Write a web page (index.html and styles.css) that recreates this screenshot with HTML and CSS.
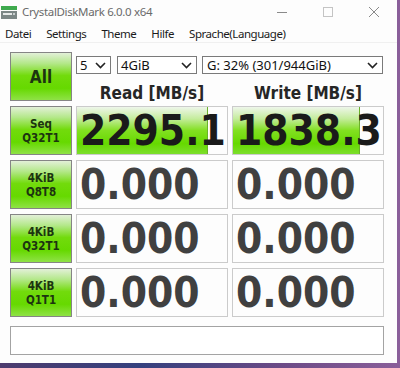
FILE: index.html
```html
<!DOCTYPE html>
<html lang="de">

<head>
    <meta charset="UTF-8">
    <title>CrystalDiskMark 6.0.0 x64</title>
    <link rel="stylesheet" href="styles.css">
</head>

<body>
    <div class="window">

        <div class="titlebar">
            <svg class="app-icon" width="16" height="13" viewBox="0 0 16 13">
                <rect x="0" y="0" width="16" height="4" fill="#3faa4e"/>
                <rect x="0" y="5" width="16" height="8" fill="#7c8786"/>
                <rect x="2" y="7" width="9" height="2" fill="#e6e9e8"/>
                <rect x="12" y="7" width="2" height="2" fill="#c9d0cf"/>
            </svg>
            <span class="title">CrystalDiskMark 6.0.0 x64</span>
            <div class="controls">
                <svg width="10" height="10" viewBox="0 0 10 10"><path d="M0 5.5h10" stroke="#8a8a8a" stroke-width="1"/></svg>
                <svg width="10" height="10" viewBox="0 0 10 10"><rect x="0.5" y="0.5" width="9" height="9" fill="none" stroke="#c4c4c4"/></svg>
                <svg width="10" height="10" viewBox="0 0 10 10"><path d="M0 0L10 10M10 0L0 10" stroke="#8a8a8a" stroke-width="1"/></svg>
            </div>
        </div>

        <div class="menubar">
            <span>Datei</span>
            <span>Settings</span>
            <span>Theme</span>
            <span>Hilfe</span>
            <span>Sprache(Language)</span>
        </div>

        <div class="main">
            <div class="bench-btn all">All</div>

            <div class="head">
                <div class="selects">
                    <div class="select count">5
                        <svg width="11" height="7" viewBox="0 0 11 7"><path d="M1 1l4.5 4.5L10 1" fill="none" stroke="#222" stroke-width="1.6"/></svg>
                    </div>
                    <div class="select size">4GiB
                        <svg width="11" height="7" viewBox="0 0 11 7"><path d="M1 1l4.5 4.5L10 1" fill="none" stroke="#222" stroke-width="1.6"/></svg>
                    </div>
                    <div class="select drive">G: 32% (301/944GiB)
                        <svg width="11" height="7" viewBox="0 0 11 7"><path d="M1 1l4.5 4.5L10 1" fill="none" stroke="#222" stroke-width="1.6"/></svg>
                    </div>
                </div>
                <div class="col-titles">
                    <span>Read [MB/s]</span>
                    <span>Write [MB/s]</span>
                </div>
            </div>

            <div class="bench-btn">Seq<br>Q32T1</div>
            <div class="cell filled" style="--fill: 130px"><span class="val">2295.1</span></div>
            <div class="cell filled" style="--fill: 126px"><span class="val">1838.3</span></div>

            <div class="bench-btn">4KiB<br>Q8T8</div>
            <div class="cell"><span class="val">0.000</span></div>
            <div class="cell"><span class="val">0.000</span></div>

            <div class="bench-btn">4KiB<br>Q32T1</div>
            <div class="cell"><span class="val">0.000</span></div>
            <div class="cell"><span class="val">0.000</span></div>

            <div class="bench-btn">4KiB<br>Q1T1</div>
            <div class="cell"><span class="val">0.000</span></div>
            <div class="cell"><span class="val">0.000</span></div>
        </div>

        <div class="comment"></div>

    </div>
</body>

</html>
```

FILE: styles.css
```css
* {
    box-sizing: border-box;
}

body {
    margin: 0;
    width: 400px;
    height: 368px;
    overflow: hidden;
    background: linear-gradient(90deg, #4d3b6e 0%, #34407e 35%, #6b4a86 70%, #8a5f9a 100%);
}

.window {
    width: 397px;
    height: 363px;
    background-color: #fdfdfd;
    font-family: "Noto Sans", "DejaVu Sans", sans-serif;
}

/* title bar */
.titlebar {
    height: 23px;
    display: flex;
    align-items: center;
    padding-left: 1px;
}

.app-icon {
    margin-top: 1px;
}

.title {
    margin-left: 5px;
    font-size: 11.5px;
    letter-spacing: -0.35px;
    color: #6a6a6a;
}

.controls {
    margin-left: auto;
    display: flex;
    gap: 36px;
    padding-right: 18px;
}

/* menu */
.menubar {
    height: 20px;
    display: flex;
    align-items: center;
    gap: 15px;
    padding: 2px 0 0 5px;
    font-size: 11.5px;
    letter-spacing: -0.45px;
    color: #1b1b1b;
    border-bottom: 1px solid #f0f0f0;
}

/* benchmark grid */
.main {
    display: grid;
    grid-template-columns: 62px 152px 152px;
    grid-auto-rows: 49px;
    column-gap: 4px;
    row-gap: 5px;
    padding: 9px 0 0 10px;
}

.bench-btn {
    display: flex;
    align-items: center;
    justify-content: center;
    text-align: center;
    border: 1px solid #858585;
    background: linear-gradient(#e2f0d8 0%, #b4e88a 22%, #72db0c 48%, #66d900 75%, #8fe246 100%);
    font-family: "DejaVu Sans Condensed", "DejaVu Sans", sans-serif;
    font-weight: bold;
    font-size: 11.5px;
    line-height: 14px;
    color: #1c3410;
}

.all {
    font-size: 17px;
}

.head {
    grid-column: 2 / 4;
    display: flex;
    flex-direction: column;
}

.selects {
    display: flex;
    margin-top: 4px;
    height: 18px;
}

.select {
    display: flex;
    align-items: center;
    justify-content: space-between;
    border: 1px solid #7a7a7a;
    background-color: #fff;
    font-size: 13px;
    color: #111;
    padding: 0 4px 0 3px;
}

.select.count {
    width: 35px;
}

.select.size {
    width: 80px;
    margin-left: 6px;
}

.select.drive {
    width: 181px;
    margin-left: 5px;
    padding-left: 4px;
}

.col-titles {
    flex: 1;
    display: grid;
    grid-template-columns: 152px 152px;
    column-gap: 4px;
    align-items: center;
    text-align: center;
    padding-top: 9px;
    font-family: "DejaVu Sans Condensed", "DejaVu Sans", sans-serif;
    font-weight: bold;
    font-size: 17px;
    color: #262626;
}

.cell {
    border: 1px solid #cbcbcb;
    background-color: #fdfdfd;
    display: flex;
    align-items: center;
    padding-left: 3px;
    overflow: visible;
    white-space: nowrap;
}

.cell.filled {
    background:
        linear-gradient(#6bb12a, #6bb12a) no-repeat var(--fill) 0 / 1px 100%,
        linear-gradient(#eef6ea 0%, #c4ec9c 25%, #82e021 50%, #66d900 78%, #7cde2c 100%) no-repeat 0 0 / var(--fill) 100%,
        #fdfdfd;
}

.val {
    font-family: "DejaVu Sans Condensed", "DejaVu Sans", sans-serif;
    font-weight: bold;
    font-size: 42px;
    line-height: 1;
    color: #404040;
}

.filled .val {
    color: #1a1a1a;
}

.comment {
    margin: 9px 0 0 10px;
    width: 374px;
    height: 29px;
    border: 1px solid #a3a3a3;
    background-color: #fff;
}
```
